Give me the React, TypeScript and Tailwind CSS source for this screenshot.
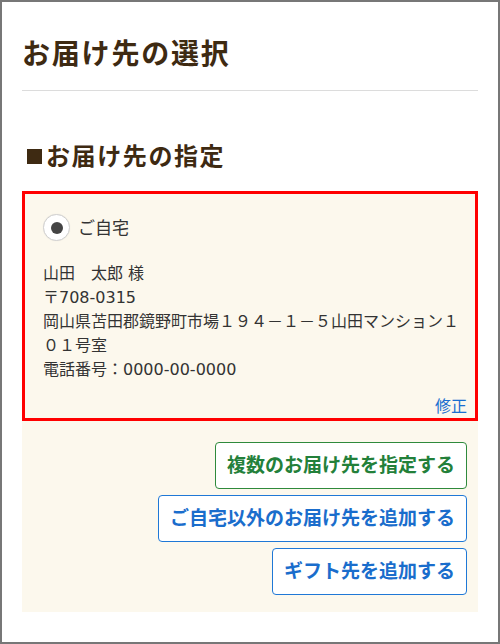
import React from "react";

const jp = { fontFamily: '"Noto Sans", "Noto Sans CJK JP", sans-serif' };
const addr = { fontFamily: '"DejaVu Sans", "Noto Sans CJK JP", sans-serif' };

export default function App() {
  return (
    <div
      className="w-[500px] h-[644px] box-border border-2 border-[#777] bg-white px-[20px] overflow-hidden"
      style={jp}
    >
      <h1 className="mt-[30px] text-[28px] leading-[42px] font-bold text-[#3e2a12] tracking-[1.8px]">
        お届け先の選択
      </h1>
      <div className="mt-[16px] h-px bg-[#dcdcdc]" />
      <h2 className="mt-[47px] flex items-center h-[36px] text-[24px] leading-[36px] font-bold text-[#3e2a12] pl-[5px] tracking-[1.6px]">
        <span className="inline-block w-[15px] h-[15px] bg-[#3e2a12] mr-[4px]" />
        お届け先の指定
      </h2>
      <div className="mt-[17px] bg-[#fcf8ed] pb-[17px] pr-[11px]">
        <div className="border-[3px] border-[#ff0000] -mr-[11px] pt-[20px] pl-[18px]">
          <div className="flex items-center">
            <div className="w-[27px] h-[27px] rounded-full bg-white border border-[#d0d0d0] flex items-center justify-center shadow-[0_0_1px_rgba(0,0,0,0.1)]">
              <div className="w-[12px] h-[12px] rounded-full bg-[#444]" />
            </div>
            <span className="ml-[8px] text-[17px] text-[#333] leading-[24px]">ご自宅</span>
          </div>
          <div className="mt-[21px] w-[420px] text-[16px] leading-[24px] text-[#333]" style={addr}>
            <div>山田　太郎 様</div>
            <div>〒708-0315</div>
            <div>岡山県苫田郡鏡野町市場１９４－１－５山田マンション１０１号室</div>
            <div>電話番号：0000-00-0000</div>
          </div>
          <div className="mt-[12px] text-right pr-[8px] text-[16px] leading-[24px] text-[#1a6fd0]">
            修正
          </div>
        </div>
        <div className="mt-[21px] flex flex-col items-end gap-[6px]">
          <button className="h-[47px] px-[11px] border border-[#2f8a3c] rounded-[4px] bg-white text-[19px] font-bold text-[#23803a]">
            複数のお届け先を指定する
          </button>
          <button className="h-[47px] px-[11px] border border-[#1f78d6] rounded-[4px] bg-white text-[19px] font-bold text-[#1a6dcc]">
            ご自宅以外のお届け先を追加する
          </button>
          <button className="h-[47px] px-[11px] border border-[#1f78d6] rounded-[4px] bg-white text-[19px] font-bold text-[#1a6dcc]">
            ギフト先を追加する
          </button>
        </div>
      </div>
    </div>
  );
}
